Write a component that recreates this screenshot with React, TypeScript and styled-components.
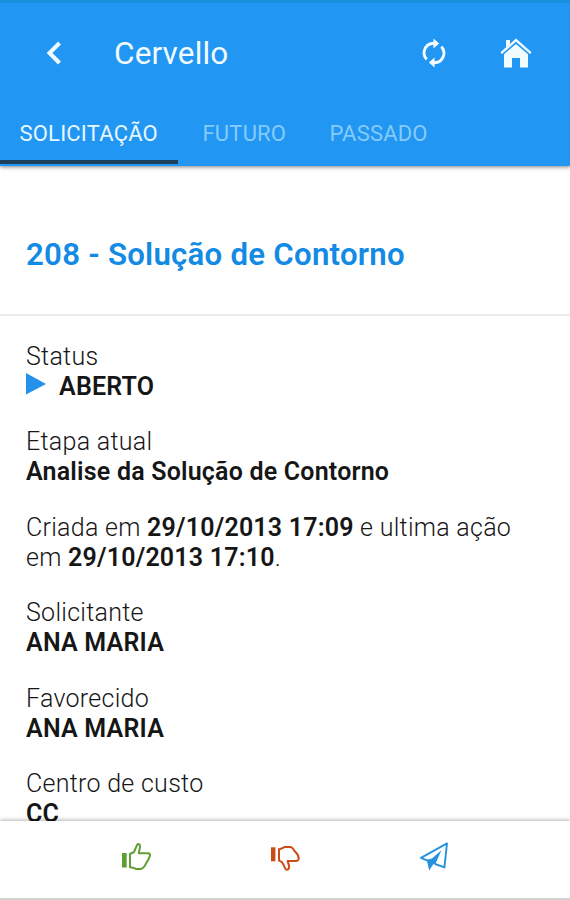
import React from "react";
import styled, { createGlobalStyle } from "styled-components";

const GlobalStyle = createGlobalStyle`
  * { box-sizing: border-box; }
  body { margin: 0; background: #fff; font-family: Roboto, sans-serif; color: #161616; }
`;

const Screen = styled.div`
  width: 570px;
  height: 900px;
  display: flex;
  flex-direction: column;
  overflow: hidden;
  background: #fff;
`;

const Header = styled.header`
  flex: none;
  height: 166px;
  display: flex;
  flex-direction: column;
  background: #2196f3;
  border-top: 3px solid #168fdc;
  box-shadow: 0 1px 4px rgba(0, 0, 0, 0.5);
  z-index: 1;
`;

const Toolbar = styled.div`
  height: 100px;
  display: flex;
  align-items: center;
  padding: 0 38px 0 46px;
  color: #f2fbff;
`;

const AppName = styled.h1`
  flex: 1;
  margin: 1px 0 0 51px;
  font-size: 31.5px;
  font-weight: 400;
  line-height: 40px;
  letter-spacing: 0.15px;
`;

const IconButton = styled.button<{ $gap?: number }>`
  display: flex;
  margin: 0 0 0 ${(p) => p.$gap ?? 0}px;
  padding: 0;
  border: 0;
  background: none;
  color: inherit;
`;

const Tabs = styled.nav`
  flex: 1;
  display: flex;
`;

const Tab = styled.a<{ $active?: boolean; $width: number }>`
  width: ${(p) => p.$width}px;
  margin: 0 ${(p) => (p.$active ? 5 : 0)}px 2px 0;
  padding: 18px 0 0 19.5px;
  font-size: 22px;
  line-height: 26px;
  letter-spacing: 0.2px;
  white-space: nowrap;
  color: ${(p) => (p.$active ? "#e6f8ff" : "#85cbfa")};
  border-bottom: 4px solid ${(p) => (p.$active ? "#1c3f5c" : "transparent")};
`;

const Content = styled.main`
  flex: 1;
  min-height: 0;
  overflow: hidden;
`;

const TitleBar = styled.div`
  height: 150px;
  padding: 68.5px 26px 0;
  border-bottom: 2px solid #ececec;
`;

const Title = styled.h2`
  margin: 0;
  font-size: 31.2px;
  line-height: 40px;
  font-weight: 600;
  letter-spacing: 0.25px;
  color: #138ae3;
`;

const Details = styled.div`
  display: flex;
  flex-direction: column;
  gap: 25.6px;
  padding: 25.5px 26px 0;
`;

const Entry = styled.p`
  margin: 0;
  font-size: 25px;
  line-height: 30px;
  font-weight: 350;
  letter-spacing: 0.28px;
  white-space: nowrap;
`;

const Value = styled.strong`
  font-weight: 600;
  letter-spacing: 0.2px;
`;

const ValueLine = styled(Value)`
  display: flex;
  gap: 13px;
`;

const Footer = styled.footer`
  flex: none;
  height: 79px;
  display: grid;
  grid-template-columns: repeat(3, 149px);
  justify-content: center;
  justify-items: center;
  align-items: start;
  padding-top: 20px;
  background: #fff;
  border-bottom: 2px solid #d2d2d2;
  box-shadow: 0 -1px 4px rgba(0, 0, 0, 0.3);
  z-index: 1;
`;

const ThumbUp = () => (
  <svg width="32" height="30" viewBox="0 0 32 30" fill="none">
    <path d="M2 12h4.7v14.5H2z" fill="#5f9f32" />
    <path
      d="M10 13 14 11 17.2 3.6Q18.2 2.6 19.6 3.6 20.4 4.8 19.8 7.2L18.8 12.2H28.2Q30.2 12.4 30 14.6 29 18.4 26.2 22.2 23.8 27.6 20.8 28H16Q13.6 26.4 10 26.2z"
      stroke="#5f9f32"
      strokeWidth="2"
      strokeLinejoin="round"
    />
  </svg>
);

const ThumbDown = () => (
  <svg width="32" height="30" viewBox="0 0 32 30" fill="none">
    <path d="M2 6.3h4.4v14H2z" fill="#cb4c15" />
    <path
      d="M10 8.2 13.4 7.2 15.4 6H21.6Q23.8 6.6 25.6 10 29.6 13.6 29.8 17.6 29.4 19.6 27.4 20H18.6L20 24.6Q20.6 28.4 18 28.8 16.4 28.8 15.8 26.6 14.4 22.8 12.6 20.8L10 19.6z"
      stroke="#cb4c15"
      strokeWidth="2"
      strokeLinejoin="round"
    />
  </svg>
);

const PaperPlane = () => (
  <svg width="32" height="30" viewBox="0 0 32 30">
    <path
      d="M9.5 19.6 3 16.8 29 2.4 26.4 26.4 17 23"
      fill="none"
      stroke="#2492df"
      strokeWidth="1.9"
      strokeLinejoin="round"
    />
    <path d="M8.7 18.8 14 17.6 23.4 9.2 17.4 23 15 23.6 11.2 29.4z" fill="#2492df" />
  </svg>
);

const entries: { label: string; value: string }[] = [
  { label: "Solicitante", value: "ANA MARIA" },
  { label: "Favorecido", value: "ANA MARIA" },
  { label: "Centro de custo", value: "CC" },
];

export default function App() {
  return (
    <Screen>
      <GlobalStyle />
      <Header>
        <Toolbar>
          <IconButton aria-label="Voltar">
            <svg width="17" height="26" viewBox="0 0 17 26" fill="none">
              <path d="M13.5 3 3.5 13l10 10" stroke="currentColor" strokeWidth="4" />
            </svg>
          </IconButton>
          <AppName>Cervello</AppName>
          <IconButton aria-label="Atualizar">
            <svg width="24" height="30" viewBox="0 0 24 30">
              <path
                d="M4.7 21.4Q1.3 18 2.2 13.2 4 5.4 12 5.3M19.3 8.6Q22.7 12 21.8 16.8 20 24.6 12 24.7"
                fill="none"
                stroke="currentColor"
                strokeWidth="2.9"
              />
              <path d="M11.4 0.4 17.2 5.4 11.4 10.4zM12.6 19.6v10L6.8 24.6z" fill="currentColor" />
            </svg>
          </IconButton>
          <IconButton aria-label="Início" $gap={54}>
            <svg width="32" height="30" viewBox="0 0 32 30">
              <path
                d="M1.2 15.2 16 2.2l14.8 13"
                fill="none"
                stroke="currentColor"
                strokeWidth="2.4"
              />
              <path d="M6 2h4v4.2L6 9.8z" fill="currentColor" />
              <path d="M4 16.3 16 5.9l12 10.4V29.5h-8v-9.6h-8v9.6H4z" fill="currentColor" />
            </svg>
          </IconButton>
        </Toolbar>
        <Tabs>
          <Tab $active $width={178}>SOLICITAÇÃO</Tab>
          <Tab $width={127}>FUTURO</Tab>
          <Tab $width={140}>PASSADO</Tab>
        </Tabs>
      </Header>
      <Content>
        <TitleBar>
          <Title>208 - Solução de Contorno</Title>
        </TitleBar>
        <Details>
          <Entry>
            Status
            <ValueLine>
              <svg width="20" height="30" viewBox="0 0 20 30">
                <path d="M0 1 20 12 0 22.5z" fill="#2492eb" />
              </svg>
              ABERTO
            </ValueLine>
          </Entry>
          <Entry>
            Etapa atual
            <br />
            <Value>Analise da Solução de Contorno</Value>
          </Entry>
          <Entry>
            Criada em <Value>29/10/2013 17:09</Value> e ultima ação
            <br />
            em <Value>29/10/2013 17:10</Value>.
          </Entry>
          {entries.map((e) => (
            <Entry key={e.label}>
              {e.label}
              <br />
              <Value>{e.value}</Value>
            </Entry>
          ))}
        </Details>
      </Content>
      <Footer>
        <IconButton aria-label="Aprovar"><ThumbUp /></IconButton>
        <IconButton aria-label="Reprovar"><ThumbDown /></IconButton>
        <IconButton aria-label="Enviar"><PaperPlane /></IconButton>
      </Footer>
    </Screen>
  );
}
